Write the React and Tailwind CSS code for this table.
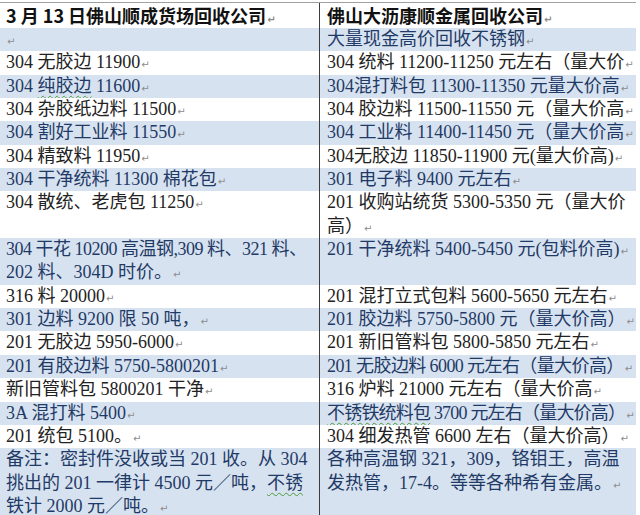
import React from 'react'

function Mark() {
  return (
    <span className="ml-[1px] inline-block leading-none align-baseline font-['DejaVu_Sans',sans-serif] text-[10px] text-[#8c8c8c]">
      ↵
    </span>
  )
}

function Wavy({ children }) {
  return (
    <span className="underline decoration-wavy decoration-[#4c9a3c] decoration-1 underline-offset-[3px]">
      {children}
    </span>
  )
}

const rows = [
  { l: [''], r: ['大量现金高价回收不锈钢'] },
  { l: ['304 无胶边 11900'], r: ['304 统料 11200-11250 元左右（量大价'] },
  { l: [<>304 <Wavy>纯胶边</Wavy> 11600</>], r: ['304混打料包 11300-11350 元量大价高'] },
  { l: ['304 杂胶纸边料 11500'], r: ['304 胶边料 11500-11550 元（量大价高'] },
  { l: ['304 割好工业料 11550'], r: ['304 工业料 11400-11450 元（量大价高'] },
  { l: ['304 精致料 11950'], r: ['304无胶边 11850-11900 元(量大价高)'] },
  { l: ['304 干净统料 11300 棉花包'], r: ['301 电子料 9400 元左右'] },
  { l: ['304 散统、老虎包 11250'], r: ['201 收购站统货 5300-5350 元（量大价', '高）'] },
  {
    l: [<span className="tracking-[-0.5px]">304 干花 10200 高温钢,309 料、321 料、</span>, '202 料、304D 时价。'],
    r: ['201 干净统料 5400-5450 元(包料价高)'],
  },
  { l: ['316 料 20000'], r: ['201 混打立式包料 5600-5650 元左右'] },
  { l: ['301 边料 9200 限 50 吨，'], r: ['201 胶边料 5750-5800 元（量大价高）'] },
  { l: ['201 无胶边 5950-6000'], r: ['201 新旧管料包 5800-5850 元左右'] },
  { l: ['201 有胶边料 5750-5800201'], r: [<span className="tracking-[-0.6px]">201 无胶边料 6000 元左右（量大价高）</span>] },
  { l: ['新旧管料包 5800201 干净'], r: ['316 炉料 21000 元左右（量大价高'] },
  {
    l: ['3A 混打料 5400'],
    r: [<span className="tracking-[-0.8px]"><Wavy>不锈铁统料包</Wavy> 3700 元左右（量大价高）</span>],
  },
  { l: ['201 统包 5100。'], r: ['304 细发热管 6600 左右（量大价高）'] },
  {
    l: ['备注：密封件没收或当 201 收。从 304', <>挑出的 201 一律计 4500 元／吨，<Wavy>不锈</Wavy></>, '铁计 2000 元／吨。'],
    r: ['各种高温钢 321，309，铬钼王，高温', '发热管，17-4。等等各种希有金属。'],
  },
]

function Lines({ lines }) {
  return lines.map((line, i) => (
    <div key={i} className="h-[23.35px]">
      {line}
      {i === lines.length - 1 ? <Mark /> : null}
    </div>
  ))
}

export default function App() {
  return (
    <div className="w-[640px] h-[515px] overflow-hidden bg-white pt-[2px] font-['Liberation_Serif','Noto_Sans_CJK_SC',serif] text-[18px]">
      <div className="w-[636px] border-t border-[#a0a0a0]">
        <div className="flex h-[25px] leading-[25px] text-[#111] font-['Noto_Sans_CJK_SC',sans-serif] font-bold">
          <div className="w-[320px] border-r border-[#3c3c3c] pl-[6px] whitespace-nowrap">
            3 月 13 日佛山顺成货场回收公司<Mark />
          </div>
          <div className="w-[316px] pl-[7px] whitespace-nowrap">
            佛山大沥康顺金属回收公司<Mark />
          </div>
        </div>
        {rows.map((row, i) => (
          <div
            key={i}
            className={`flex leading-[23.35px] ${i % 2 === 0 ? 'bg-[#d7e2f0] text-[#1f3a66]' : 'bg-white text-[#222222]'}`}
          >
            <div className="w-[320px] shrink-0 border-r border-[#3c3c3c] pl-[6px] whitespace-nowrap overflow-hidden">
              <Lines lines={row.l} />
            </div>
            <div className="w-[316px] shrink-0 pl-[7px] whitespace-nowrap overflow-hidden">
              <Lines lines={row.r} />
            </div>
          </div>
        ))}
        <div className="flex h-[60px] bg-[#d7e2f0]">
          <div className="w-[320px] shrink-0 border-r border-[#3c3c3c]" />
        </div>
      </div>
    </div>
  )
}
